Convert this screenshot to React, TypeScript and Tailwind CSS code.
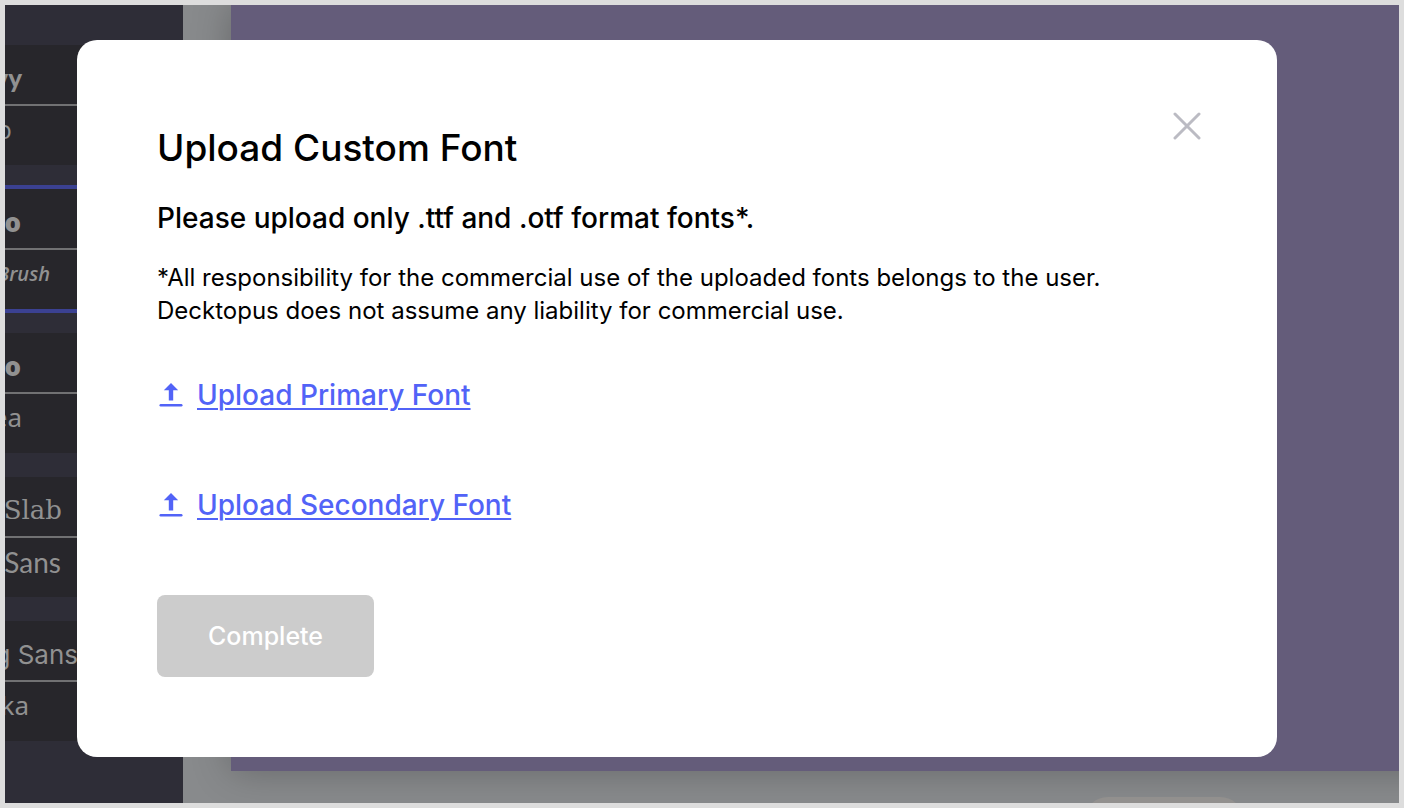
interface FontPair {
    primary: string;
    secondary: string;
    primaryClass: string;
    secondaryClass: string;
    selected?: boolean;
}

const fontPairs: FontPair[] = [
    {
        primary: 'vy',
        secondary: 'o',
        primaryClass: 'w-[17px] font-["Lato"] text-[26px] font-black',
        secondaryClass: 'w-[7px] font-["Open_Sans"] text-[26px]',
    },
    {
        primary: 'o',
        secondary: 'Brush',
        primaryClass: 'w-4 font-["Open_Sans"] text-[26px] font-extrabold',
        secondaryClass: 'w-[45px] font-["Open_Sans"] text-[20px] font-semibold italic',
        selected: true,
    },
    {
        primary: 'o',
        secondary: 'ea',
        primaryClass: 'w-4 font-["Open_Sans"] text-[26px] font-extrabold',
        secondaryClass: 'w-[17px] font-["Noto_Sans"] text-[26px]',
    },
    {
        primary: 'Slab',
        secondary: 'Sans',
        primaryClass: 'w-[57px] font-["DejaVu_Serif"] text-[26px]',
        secondaryClass: 'w-14 font-["Lato"] text-[28px]',
    },
    {
        primary: 'g Sans',
        secondary: 'ka',
        primaryClass: 'w-[73px] font-["Inter"] text-[26px]',
        secondaryClass: 'w-6 font-["Noto_Sans"] text-[26px]',
    },
];

const FontCard = ({ pair }: { pair: FontPair }) => (
    <div className={`border-y-4 bg-[#27262b] bg-clip-padding text-[#919191] ${pair.selected ? 'border-[#3b4192]' : 'border-transparent'}`}>
        <div className="flex h-[61px] items-center overflow-hidden border-b-2 border-[#717173] pt-2">
            <div className={`flex justify-end whitespace-nowrap ${pair.primaryClass}`}>{pair.primary}</div>
        </div>
        <div className="flex h-[59px] items-center overflow-hidden pb-3">
            <div className={`flex justify-end whitespace-nowrap ${pair.secondaryClass}`}>{pair.secondary}</div>
        </div>
    </div>
);

const UploadIcon = () => (
    <svg viewBox="0 0 26 26" className="size-[26px]" fill="currentColor" aria-hidden="true">
        <path d="M14 1 L21.2 8.2 H16.2 V18.5 H11.8 V8.2 H6.8 Z" />
        <rect x="2.5" y="22" width="23" height="2.4" rx="1.2" />
    </svg>
);

const UploadButton = ({ label }: { label: string }) => (
    <button type="button" className="flex h-10 items-center gap-3.5 text-[28px] font-medium text-[#5263f7]">
        <UploadIcon />
        <span className="underline decoration-2 underline-offset-3">{label}</span>
    </button>
);

const UploadFontModal = () => (
    <div
        role="dialog"
        aria-labelledby="upload-title"
        className="relative w-full max-w-[1200px] rounded-[20px] bg-white p-20 text-black"
    >
        <button type="button" aria-label="Close" className="absolute top-[72px] right-19 text-[#bbbbc3]">
            <svg viewBox="0 0 28 28" className="size-7" fill="none" stroke="currentColor" strokeWidth="3" strokeLinecap="round">
                <path d="M2 2 L26 26 M26 2 L2 26" />
            </svg>
        </button>
        <h1 id="upload-title" className="text-[37px] leading-14 font-medium">Upload Custom Font</h1>
        <h2 className="mt-6 text-[28px] leading-9 font-medium">Please upload only .ttf and .otf format fonts*.</h2>
        <p className="mt-[25px] text-[24px] leading-[33px]">
            *All responsibility for the commercial use of the uploaded fonts belongs to the user.
            <br />
            Decktopus does not assume any liability for commercial use.
        </p>
        <div className="mt-12 flex flex-col items-start gap-[70px]">
            <UploadButton label="Upload Primary Font" />
            <UploadButton label="Upload Secondary Font" />
            <button type="button" disabled className="rounded-lg bg-[#cccccc] px-[51px] py-6 text-[25px] leading-[34px] font-medium text-white">
                Complete
            </button>
        </div>
    </div>
);

export default function App() {
    return (
        <div className="relative flex h-screen overflow-hidden border-5 border-[#dddddd] bg-[#888a8c] font-['Inter',sans-serif]">
            <aside className="flex w-[178px] shrink-0 flex-col gap-4 bg-[#2e2d37] pt-9">
                {fontPairs.map((pair, i) => (
                    <FontCard key={i} pair={pair} />
                ))}
            </aside>

            <main className="flex flex-1 flex-col overflow-hidden pl-12">
                {/* Slide runs past the right edge */}
                <div className="-mr-12 min-h-0 flex-1 bg-[#645c7a] shadow-[0_0_36px_rgba(0,0,0,0.26)]" />
                <div className="flex h-8 shrink-0 justify-end overflow-hidden pt-6.5 pr-[155px]">
                    <div className="h-12 w-[160px] shrink-0 rounded-full bg-[#92908e]" />
                </div>
            </main>

            {/* Modal */}
            <div className="absolute inset-0 flex items-start justify-center pt-[35px] pr-[50px]">
                <UploadFontModal />
            </div>
        </div>
    );
}
